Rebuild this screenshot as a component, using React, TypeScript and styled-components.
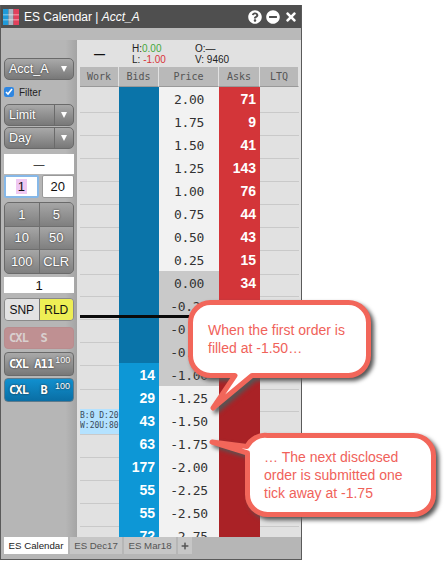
import React from 'react';
import styled, { createGlobalStyle, css } from 'styled-components';
import { FaQuestionCircle, FaMinusCircle, FaTimes, FaPlus } from 'react-icons/fa';

const GlobalStyle = createGlobalStyle`
  html, body {
    margin: 0;
    background: #fff;
    font-family: "Liberation Sans", Arial, sans-serif;
  }
`;

const MONO = '"DejaVu Sans Mono", "Liberation Mono", monospace';

const Page = styled.div`
  position: relative;
  width: 446px;
  height: 565px;
  padding-top: 5px;
  box-sizing: border-box;
  overflow: hidden;
`;

const Window = styled.div`
  width: 302px;
  height: 555px;
  box-sizing: border-box;
  display: flex;
  flex-direction: column;
  border: 1px solid #5a5a5a;
  border-top: 0;
  background: #b6b6b6;
`;

const TitleBar = styled.div`
  height: 23px;
  flex: none;
  display: flex;
  align-items: center;
  gap: 5px;
  padding: 0 3px 0 2px;
  background: #4f4f4f;
  color: #fff;
`;

const Title = styled.div`
  flex: 1;
  font-size: 12px;
  white-space: nowrap;

  em {
    font-style: italic;
  }
`;

const TitleIcons = styled.div`
  display: flex;
  align-items: center;
  gap: 4px;
  font-size: 14px;
`;

const SubBar = styled.div`
  height: 12px;
  flex: none;
  background: #b9b9b9;
`;

const Body = styled.div`
  flex: 1;
  min-height: 0;
  display: flex;
`;

const Sidebar = styled.div`
  width: 76px;
  flex: none;
  box-sizing: border-box;
  padding: 18px 3px 0 3px;
  display: flex;
  flex-direction: column;
  background: linear-gradient(to right, #b6b6b6 85%, #a4a4a4);
`;

const buttonFace = css`
  background: linear-gradient(to bottom, #a9a9a9, #787878);
  color: #fff;
  text-shadow: 0 0 2px #222;
  border: 1px solid #6a6a6a;
`;

const SelectBox = styled.div<{ $mt?: number }>`
  ${buttonFace}
  height: 22px;
  box-sizing: border-box;
  margin-top: ${(p) => p.$mt ?? 0}px;
  border-radius: 5px;
  display: flex;
  align-items: center;
  font-size: 12.5px;
`;

const SelectLabel = styled.div`
  flex: 1;
  padding-left: 4px;
  white-space: nowrap;
`;

const SelectCaret = styled.div<{ $split?: boolean }>`
  width: 19px;
  height: 100%;
  box-sizing: border-box;
  display: flex;
  align-items: center;
  justify-content: center;
  border-left: ${(p) => (p.$split ? '1px solid #6a6a6a' : '0')};

  &::after {
    content: '';
    border-left: 3px solid transparent;
    border-right: 3px solid transparent;
    border-top: 6px solid #fff;
  }
`;

const FilterRow = styled.label`
  margin-top: 6px;
  height: 12px;
  display: flex;
  align-items: center;
  gap: 5px;
  font-size: 10px;
  color: #222;

  input {
    margin: 0;
    width: 10px;
    height: 10px;
    accent-color: #2f86e0;
  }
`;

const WhiteBox = styled.div<{ $mt: number; $h: number; $size?: number }>`
  margin-top: ${(p) => p.$mt}px;
  height: ${(p) => p.$h}px;
  background: #fff;
  color: #111;
  font-size: ${(p) => p.$size ?? 13}px;
  display: flex;
  align-items: center;
  justify-content: center;
`;

const InputPair = styled.div`
  margin-top: 1px;
  display: flex;
  gap: 3px;
`;

const QtyInput = styled.div<{ $focus?: boolean }>`
  flex: 1;
  height: 23px;
  box-sizing: border-box;
  background: #fff;
  color: #111;
  font-size: 13px;
  display: flex;
  align-items: center;
  justify-content: center;
  border: ${(p) => (p.$focus ? '2px solid #86b8e8' : '1px solid #999')};
  border-radius: 2px;

  mark {
    background: #f0c8f2;
    color: #111;
    padding: 0 2px;
  }
`;

const QtyGrid = styled.div`
  margin-top: 4px;
  display: grid;
  grid-template-columns: 1fr 1fr;
  grid-auto-rows: 22.5px;
  border: 1px solid #6a6a6a;
  border-radius: 5px;
  overflow: hidden;
  gap: 1px;
  background: #6f6f6f;
`;

const QtyCell = styled.div`
  background: linear-gradient(to bottom, #a6a6a6, #7f7f7f);
  color: #fff;
  text-shadow: 0 0 2px #222;
  font-size: 13px;
  display: flex;
  align-items: center;
  justify-content: center;
`;

const ToggleRow = styled.div`
  margin-top: 5px;
  height: 23px;
  flex: none;
  display: flex;
  border: 1px solid #8a8a8a;
  border-radius: 4px;
  overflow: hidden;
  box-sizing: border-box;
`;

const Toggle = styled.div<{ $on?: boolean }>`
  flex: 1;
  display: flex;
  align-items: center;
  justify-content: center;
  font-size: 12px;
  color: #111;
  background: ${(p) => (p.$on ? '#eeee55' : '#e2e2e2')};
  border-left: ${(p) => (p.$on ? '1px solid #777' : '0')};
`;

const CancelButton = styled.div<{ $kind: 'sell' | 'all' | 'buy'; $mt: number }>`
  ${buttonFace}
  margin-top: ${(p) => p.$mt}px;
  height: 24px;
  flex: none;
  box-sizing: border-box;
  border-radius: 4px;
  padding: 0 3px 0 4px;
  display: flex;
  align-items: center;
  font-family: ${MONO};
  font-size: 12px;
  letter-spacing: -0.9px;
  font-weight: bold;
  white-space: pre;

  sup {
    font-family: "Liberation Sans", sans-serif;
    font-size: 9px;
    letter-spacing: 0;
    font-weight: normal;
    margin-left: 2px;
    align-self: flex-start;
    margin-top: 2px;
  }
  ${(p) =>
    p.$kind === 'sell' &&
    css`
      height: 22px;
      background: #bf9092;
      border-color: #b98c8e;
      color: #d9d0d0;
      text-shadow: none;
    `}
  ${(p) =>
    p.$kind === 'buy' &&
    css`
      background: linear-gradient(to bottom, #1190cf, #0a6ea4);
      border-color: #5d7a8c;

      sup {
        margin-left: auto;
      }
    `}
`;

const Main = styled.div`
  flex: 1;
  min-width: 0;
  display: flex;
  flex-direction: column;
  background: #e1e1e1;
  padding-left: 3px;
`;

const StatsRow = styled.div`
  height: 27px;
  flex: none;
  display: flex;
  align-items: center;
  font-size: 10px;
  color: #222;
`;

const LastDash = styled.div`
  width: 52px;
  padding-left: 14px;
  box-sizing: border-box;
  font-size: 11px;
  font-weight: bold;
  color: #111;
`;

const StatBlock = styled.div<{ $w: number }>`
  width: ${(p) => p.$w}px;
  line-height: 11px;
  white-space: nowrap;
`;

const Up = styled.span`
  color: #45a83c;
`;

const Down = styled.span`
  color: #d8343a;
`;

const Ladder = styled.div`
  width: 219px;
  flex: 1;
  min-height: 0;
  overflow: hidden;
  display: flex;
  flex-direction: column;
`;

const ColumnsGrid = styled.div`
  display: grid;
  grid-template-columns: 39px 40px 60px 41px 39px;
`;

const HeaderCell = styled.div`
  height: 20px;
  box-sizing: border-box;
  background: #b9b9b9;
  border-right: 1px solid #e1e1e1;
  border-bottom: 1px solid #999;
  font-family: ${MONO};
  font-size: 10px;
  color: #555;
  display: flex;
  align-items: center;
  justify-content: center;
`;

const Row = styled(ColumnsGrid)`
  position: relative;
  flex: none;
  height: 23px;
`;

const MarketLine = styled.div`
  position: absolute;
  left: -1px;
  right: 0;
  bottom: -1px;
  height: 3px;
  background: #0a0a0a;
  z-index: 1;
`;

const SideCell = styled.div`
  border-bottom: 1px solid #c9c9c9;
`;

const WorkCell = styled(SideCell)<{ $filled?: boolean }>`
  margin-left: ${(p) => (p.$filled ? '-1px' : '0')};
  background: ${(p) => (p.$filled ? '#b4e2ff' : 'transparent')};
  font-family: ${MONO};
  font-size: 8px;
  line-height: 10px;
  color: #3a4a5a;
  padding: 2px 0 0 1px;
  white-space: pre;
`;

const QtyValue = styled.div<{ $bg: string; $line: string }>`
  background: ${(p) => p.$bg};
  border-bottom: 1px solid ${(p) => p.$line};
  color: #fff;
  font-size: 14px;
  font-weight: bold;
  text-align: right;
  padding-right: 4px;
  line-height: 24px;
`;

const PriceCell = styled.div<{ $gray: boolean; $mark?: string }>`
  background: ${(p) => (p.$gray ? '#c9c9c9' : '#f2f2f2')};
  border-bottom: ${(p) => (p.$mark ? `2px solid ${p.$mark}` : '1px solid #d6d6d6')};
  font-family: ${MONO};
  font-size: 13px;
  letter-spacing: -0.3px;
  color: #333;
  text-align: center;
  line-height: 25px;
`;

const TabBar = styled.div`
  height: 22px;
  flex: none;
  box-sizing: border-box;
  padding-left: 3px;
  display: flex;
  gap: 2px;
  background: #b6b6b6;
`;

const Tab = styled.div<{ $active?: boolean; $w: number }>`
  width: ${(p) => p.$w}px;
  height: 17px;
  display: flex;
  align-items: center;
  justify-content: center;
  font-size: 9.7px;
  white-space: nowrap;
  background: ${(p) => (p.$active ? '#fff' : '#c6c6c6')};
  color: ${(p) => (p.$active ? '#222' : '#555')};
`;

const Callout = styled.div<{ $left: number; $top: number; $w: number; $h: number; $px: number; $py: number }>`
  position: absolute;
  left: ${(p) => p.$left}px;
  top: ${(p) => p.$top}px;
  width: ${(p) => p.$w}px;
  height: ${(p) => p.$h}px;
  box-sizing: border-box;
  padding: ${(p) => p.$py}px 0 0 ${(p) => p.$px}px;
  z-index: 5;
  font-size: 14px;
  line-height: 18px;
  color: #f0625a;
  white-space: nowrap;
`;

const CalloutShape = styled.svg`
  position: absolute;
  left: 0;
  top: 0;
  overflow: visible;
  filter: drop-shadow(3px 3px 2px #555);
  z-index: -1;
`;

const WindowLogo = () => (
  <svg width="16" height="16" viewBox="0 0 16 16">
    <rect width="5.5" height="16" fill="#1f9ad9" />
    <rect x="5.5" width="5" height="16" fill="#a9b4c2" />
    <rect x="10.5" width="5.5" height="16" fill="#e2405c" />
    <rect y="5" width="16" height="1.5" fill="#fff" opacity="0.35" />
    <rect y="10" width="16" height="1.5" fill="#fff" opacity="0.35" />
  </svg>
);

type RowData = {
  price: string;
  bid?: number;
  ask?: number;
};

const rows: RowData[] = [
  { price: '2.00', ask: 71 },
  { price: '1.75', ask: 9 },
  { price: '1.50', ask: 41 },
  { price: '1.25', ask: 143 },
  { price: '1.00', ask: 76 },
  { price: '0.75', ask: 44 },
  { price: '0.50', ask: 43 },
  { price: '0.25', ask: 15 },
  { price: '0.00', ask: 34 },
  { price: '-0.25' },
  { price: '-0.50' },
  { price: '-0.75' },
  { price: '-1.00', bid: 14 },
  { price: '-1.25', bid: 29 },
  { price: '-1.50', bid: 43 },
  { price: '-1.75', bid: 63 },
  { price: '-2.00', bid: 177 },
  { price: '-2.25', bid: 55 },
  { price: '-2.50', bid: 55 },
  { price: '-2.75', bid: 72 },
];

const App: React.FC = () => (
  <Page>
    <GlobalStyle />
    <Window>
      <TitleBar>
        <WindowLogo />
        <Title>
          ES Calendar | <em>Acct_A</em>
        </Title>
        <TitleIcons>
          <FaQuestionCircle />
          <FaMinusCircle />
          <FaTimes />
        </TitleIcons>
      </TitleBar>
      <SubBar />
      <Body>
        <Sidebar>
          <SelectBox>
            <SelectLabel>Acct_A</SelectLabel>
            <SelectCaret />
          </SelectBox>
          <FilterRow>
            <input type="checkbox" defaultChecked />
            Filter
          </FilterRow>
          <SelectBox $mt={6}>
            <SelectLabel>Limit</SelectLabel>
            <SelectCaret $split />
          </SelectBox>
          <SelectBox $mt={1}>
            <SelectLabel>Day</SelectLabel>
            <SelectCaret $split />
          </SelectBox>
          <WhiteBox $mt={5} $h={20} $size={11}>
            —
          </WhiteBox>
          <InputPair>
            <QtyInput $focus>
              <mark>1</mark>
            </QtyInput>
            <QtyInput>20</QtyInput>
          </InputPair>
          <QtyGrid>
            {['1', '5', '10', '50', '100', 'CLR'].map((label) => (
              <QtyCell key={label}>{label}</QtyCell>
            ))}
          </QtyGrid>
          <WhiteBox $mt={3.5} $h={16}>
            1
          </WhiteBox>
          <ToggleRow>
            <Toggle>SNP</Toggle>
            <Toggle $on>RLD</Toggle>
          </ToggleRow>
          <CancelButton $kind="sell" $mt={6}>
            {'CXL  S'}
          </CancelButton>
          <CancelButton $kind="all" $mt={3}>
            {'CXL A11'}
            <sup>100</sup>
          </CancelButton>
          <CancelButton $kind="buy" $mt={2}>
            {'CXL  B'}
            <sup>100</sup>
          </CancelButton>
        </Sidebar>
        <Main>
          <StatsRow>
            <LastDash>—</LastDash>
            <StatBlock $w={63}>
              <div>
                H:<Up>0.00</Up>
              </div>
              <div>
                L: <Down>-1.00</Down>
              </div>
            </StatBlock>
            <StatBlock $w={50}>
              <div>O:—</div>
              <div>V: 9460</div>
            </StatBlock>
          </StatsRow>
          <Ladder>
            <ColumnsGrid>
              {['Work', 'Bids', 'Price', 'Asks', 'LTQ'].map((name) => (
                <HeaderCell key={name}>{name}</HeaderCell>
              ))}
            </ColumnsGrid>
            {rows.map((row, i) => (
              <Row key={row.price}>
                {row.price === '-1.50' ? (
                  <WorkCell $filled>{'B:0 D:20\nW:20U:80'}</WorkCell>
                ) : (
                  <WorkCell />
                )}
                <QtyValue $bg={row.bid ? '#0d97d6' : '#0a74a9'} $line={row.bid ? '#0a7bb0' : '#07608e'}>
                  {row.bid}
                </QtyValue>
                <PriceCell
                  $gray={i >= 8 && i <= 12}
                  $mark={row.price === '0.25' ? '#5aa83c' : row.price === '-1.00' ? '#d23a3a' : undefined}
                >
                  {row.price}
                </PriceCell>
                <QtyValue $bg={i <= 9 ? '#d33539' : '#aa2226'} $line={i <= 9 ? '#a92528' : '#8f1c20'}>
                  {row.ask}
                </QtyValue>
                <SideCell />
                {row.price === '-0.25' && <MarketLine />}
              </Row>
            ))}
          </Ladder>
        </Main>
      </Body>
      <TabBar>
        <Tab $active $w={64}>
          ES Calendar
        </Tab>
        <Tab $w={52}>ES Dec17</Tab>
        <Tab $w={52}>ES Mar18</Tab>
        <Tab $w={14}>
          <FaPlus size={8} />
        </Tab>
      </TabBar>
    </Window>
    <Callout $left={188} $top={300} $w={183} $h={78} $px={20} $py={21}>
      <CalloutShape width="183" height="78" viewBox="0 0 183 78">
        <path
          d="M22.5 2.5H160.5A20 20 0 0 1 180.5 22.5V55.5A20 20 0 0 1 160.5 75.5H64L25 108L47 75.5H22.5A20 20 0 0 1 2.5 55.5V22.5A20 20 0 0 1 22.5 2.5Z"
          fill="#fff"
          stroke="#f2665a"
          strokeWidth="5"
          strokeLinejoin="round"
        />
      </CalloutShape>
      When the first order is
      <br />
      filled at -1.50…
    </Callout>
    <Callout $left={245} $top={433} $w={191} $h={84} $px={19} $py={15}>
      <CalloutShape width="191" height="84" viewBox="0 0 191 84">
        <path
          d="M22.5 2.5H168.5A20 20 0 0 1 188.5 22.5V61.5A20 20 0 0 1 168.5 81.5H22.5A20 20 0 0 1 2.5 61.5V20L-33 9L2 13.5A20 20 0 0 1 22.5 2.5Z"
          fill="#fff"
          stroke="#f2665a"
          strokeWidth="5"
          strokeLinejoin="round"
        />
      </CalloutShape>
      … The next disclosed
      <br />
      order is submitted one
      <br />
      tick away at -1.75
    </Callout>
  </Page>
);

export default App;
